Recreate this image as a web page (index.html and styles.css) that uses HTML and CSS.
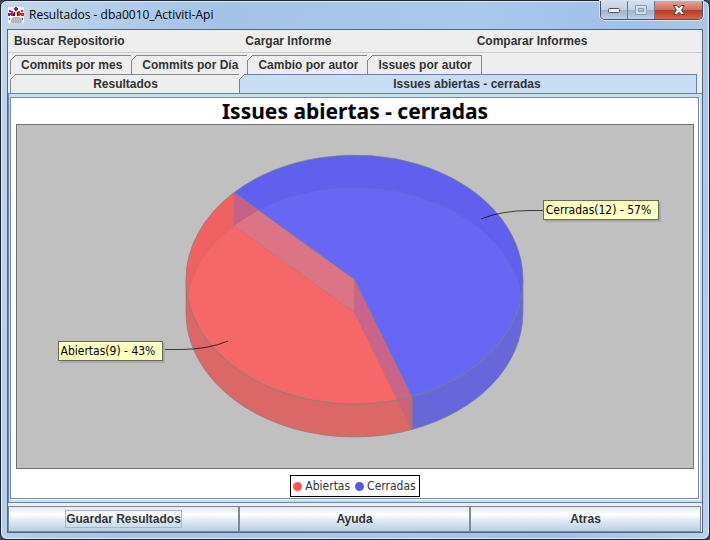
FILE: index.html
```html
<!DOCTYPE html>
<html lang="es">
<head>
<meta charset="utf-8">
<title>Resultados - dba0010_Activiti-Api</title>
<link rel="stylesheet" href="styles.css">
</head>
<body>
<div class="window">
  <header class="titlebar">
    <svg class="app-icon" width="16" height="16" viewBox="0 0 16 16" aria-hidden="true">
      <path fill="#fff" d="M0 0h16v16H0z"/>
      <path fill="#7b1fa2" d="M7 0h2v1h1v2H9v1H7V3H6V1h1zM1 3h2v2H1zM0 6h2v3H0z"/>
      <path fill="#c2185b" d="M3 4h2v2h1v3H3V8H2V6h1z"/>
      <path fill="#d8203c" d="M13 3h2v2h-2zM10 4h2v2h4v3h-3V8h-1v1h-2z"/>
      <path fill="#222" d="M6 5h1v4h2V5h1v4H5V7h1z"/>
      <path fill="#e8d44d" d="M7 4h2v4H7z"/>
      <path fill="#b8b8b8" d="M3 16v-3q0-3 3-3h5q3 0 3 3v3z"/>
      <path fill="#555" d="M1 11h1v2H1zM14 11h1v2h-1z"/>
    </svg>
    <h1 class="window-title">Resultados - dba0010_Activiti-Api</h1>
    <div class="window-buttons">
      <button class="win-btn" type="button" aria-label="Minimizar"><svg width="12" height="5" viewBox="0 0 12 5"><rect x=".5" y=".5" width="11" height="4" rx="1" fill="#fff" stroke="#4b5366"/></svg></button>
      <button class="win-btn" type="button" aria-label="Maximizar" disabled><svg width="12" height="10" viewBox="0 0 12 10"><path fill="#d5dde8" stroke="#8f9aab" fill-rule="evenodd" d="M.5.5h11v9H.5zM3.500 3.500v3h5v-3z"/></svg></button>
      <button class="win-btn win-btn-close" type="button" aria-label="Cerrar"><svg width="12" height="10" viewBox="0 0 12 10"><path fill="#fff" stroke="#4f4650" d="M.5.5h3.400L6 2.800 8.100.5h3.400L8.500 5l3 4.500H8.100L6 7.200 3.900 9.500H.5L3.500 5z"/></svg></button>
    </div>
  </header>
  <main class="content">
    <nav class="menu">
      <a href="#buscar">Buscar Repositorio</a>
      <a href="#cargar">Cargar Informe</a>
      <a href="#comparar">Comparar Informes</a>
    </nav>
    <div class="tabs" role="tablist">
      <div class="tab-row">
        <button class="tab" role="tab" type="button">Commits por mes</button>
        <button class="tab" role="tab" type="button">Commits por Día</button>
        <button class="tab" role="tab" type="button">Cambio por autor</button>
        <button class="tab" role="tab" type="button">Issues por autor</button>
      </div>
      <div class="tab-row">
        <button class="tab tab-half" role="tab" type="button">Resultados</button>
        <button class="tab tab-selected" role="tab" type="button" aria-selected="true">Issues abiertas - cerradas</button>
      </div>
    </div>
    <section class="panel" role="tabpanel">
      <div class="chart">
        <h2 class="chart-title">Issues abiertas - cerradas</h2>
        <div class="plot">
          <svg class="pie" viewBox="17 125 676 343" role="img" aria-label="Abiertas 43%, Cerradas 57%">
            <g stroke="#808080" stroke-opacity=".7">
              <path fill="#6767db" d="M523 279.500V312.500A168.500 124.500 0 0 1 412 429.500V396.500Z"/>
              <path fill="#dc6767" d="M186 279.500V312.500A168.500 124.500 0 0 0 412 429.500V396.500Z"/>
              <path fill="#6060ee" d="M234 192.500A168.500 124.500 0 0 1 523 279.500A168.500 124.500 0 0 1 412 396.500L354.500 279.500Z"/>
              <path fill="#f06161" d="M234 192.500A168.500 124.500 0 0 0 186 279.500A168.500 124.500 0 0 0 412 396.500L354.500 279.500Z"/>
            </g>
            <path fill="#f66767" d="M187.500 296A168.500 124.500 0 0 1 234 225.500L354.500 312.500 397.500 399.900A168.500 124.500 0 0 1 187.500 296Z"/>
            <path fill="#6767f6" d="M258.600 210.300A168.500 124.500 0 0 1 521.500 296A168.500 124.500 0 0 1 412 396.500L354.500 279.500Z"/>
            <path fill="#c66088" d="M234 192.500V225.500Q246 217 258.600 210.300Z"/>
            <path fill="#db7585" d="M234 225.500Q246 217 258.600 210.300L354.500 279.500V312.500Z"/>
            <path fill="#cb648c" d="M354.500 279.500V312.500L397.500 399.900 412 396.500Z"/>
            <path fill="#cb6478" d="M397.500 399.900L412 396.500V429.500Z"/>
            <g fill="none" stroke="#808080" stroke-opacity=".7">
              <path d="M187.500 296A168.500 124.500 0 0 0 521.500 296M234 192.500L354.500 279.500 412 396.500V429.500"/>
              <path stroke-opacity=".25" d="M187.500 296A168.500 124.500 0 0 1 521.500 296M234 192.500V225.500L354.500 312.500 412 429.500M354.500 279.500V312.500"/>
            </g>
            <g fill="none" stroke="#000" stroke-opacity=".7">
              <path d="M481 219Q502 210.500 530 210.500H543"/>
              <path d="M228 341Q208 349.500 180 349.500H165"/>
            </g>
          </svg>
          <span class="label label-closed">Cerradas(12) - 57%</span>
          <span class="label label-open">Abiertas(9) - 43%</span>
        </div>
        <ul class="legend">
          <li class="key key-open">Abiertas</li>
          <li class="key key-closed">Cerradas</li>
        </ul>
      </div>
    </section>
    <footer class="actions">
      <button class="action" type="button"><span class="focus">Guardar Resultados</span></button>
      <button class="action" type="button">Ayuda</button>
      <button class="action" type="button">Atras</button>
    </footer>
  </main>
</div>
</body>
</html>
```
FILE: styles.css
```css
* { box-sizing: border-box; }
body { margin: 0; background: #3f4956; }
button { margin: 0; padding: 0; font: inherit; color: inherit; }

.window {
  display: flex;
  flex-direction: column;
  height: 100vh;
  padding: 0 6px 6px;
  border: 1px solid #1c2530;
  border-radius: 7px;
  background: linear-gradient(100deg, #c3d7ec 0, #a3c3e8 28%, #a8c8ee 60%, #9fc0e8 80%, #b7d1ee 100%);
  box-shadow: inset 0 0 0 1px #dcebfa;
  font: bold 12px/16px "Liberation Sans", Arial, sans-serif;
  color: #333;
}

.titlebar {
  display: flex;
  flex: none;
  align-items: flex-start;
  height: 28px;
  padding-left: 1px;
}
.app-icon { flex: none; margin-top: 6px; }
.window-title {
  flex: 1;
  margin: 5px 0 0 5px;
  font: 12px/18px "Open Sans", "Segoe UI", sans-serif;
  color: #000;
}
.window-buttons {
  display: flex;
  height: 19px;
  border: 1px solid #4a5468;
  border-top: 0;
  border-radius: 0 0 5px 5px;
  overflow: hidden;
  box-shadow: 0 0 0 1px #d5e4f5;
}
.win-btn {
  display: grid;
  place-items: center;
  width: 27px;
  border: 0;
  border-right: 1px solid #6d7b90;
  background: linear-gradient(#d3dfec, #c1d1e3 48%, #9eb2cc 50%, #bdd0e5);
}
.win-btn-close {
  width: 47px;
  border-right: 0;
  background: linear-gradient(#e2a596, #cf6f5d 48%, #b93c25 50%, #d4654a);
}

.content {
  display: flex;
  flex: 1;
  flex-direction: column;
  min-height: 0;
  border: 1px solid #56677c;
  background: #eee;
}

.menu {
  display: grid;
  grid-template-columns: repeat(3, 1fr);
  height: 23px;
  padding-top: 3px;
  border-bottom: 1px solid #ccc;
}
.menu a {
  padding-left: 6px;
  color: inherit;
  text-decoration: none;
}

.tabs { padding: 2px 5px 0 2px; }
.tab-row { display: flex; height: 19px; }
.tab {
  position: relative;
  margin-right: -1px;
  padding: 0 9px 0 10px;
  border: 1px solid #7a8a99;
  border-bottom: 0;
  background: #eee;
  font-weight: bold;
}
/* Cut-off top left corner of each tab */
.tab::before {
  content: "";
  position: absolute;
  top: -1px;
  left: -1px;
  width: 6px;
  height: 6px;
  background: linear-gradient(135deg, #eee 42%, #7a8a99 42%, #7a8a99 58%, transparent 58%);
}
.tab-half { flex: 0 0 230px; }
.tab-row .tab-selected {
  flex: 1;
  margin-right: 0;
  padding-right: 12px;
  border-color: #6382bf;
  background: #c8ddf2;
}

.panel {
  display: flex;
  flex: 1;
  min-height: 0;
  padding: 3px 3px 3px 1px;
  border: 1px solid #6382bf;
  border-right: 0;
  background: #c8ddf2;
}
.chart {
  display: flex;
  flex: 1;
  flex-direction: column;
  align-items: center;
  min-width: 0;
  padding: 0 4px 1px 5px;
  border: 1px solid #7a8a99;
  background: #fff;
  box-shadow: 1px 1px 0 #fff;
}
.chart-title {
  margin: 0;
  font: bold 21px/26px "Noto Sans", Tahoma, sans-serif;
  color: #000;
}
.plot {
  position: relative;
  flex: 1;
  width: 100%;
  min-height: 0;
  border: 1px solid #707070;
  background: #c0c0c0;
}
.pie { display: block; width: 100%; height: 100%; }
.label {
  position: absolute;
  padding: 0 7px 0 2px;
  border: 1px solid #6b6b55;
  background: #ffffc0;
  box-shadow: 2px 2px 0 #aaa;
  font: 12px/18px "DejaVu Sans Condensed", Tahoma, sans-serif;
  color: #000;
}
.label-closed { top: 22%; right: 5%; }
.label-open { top: 63%; left: 6%; }

.legend {
  display: flex;
  gap: 5px;
  margin: 6px 0 0;
  padding: 0 3px 0 2px;
  border: 1px solid #000;
  list-style: none;
  font: 12px/20px "DejaVu Sans Condensed", Tahoma, sans-serif;
}
.key { display: flex; align-items: center; gap: 3px; }
.key::before {
  content: "";
  width: 9px;
  height: 9px;
  border-radius: 50%;
}
.key-open::before { background: #f55; }
.key-closed::before { background: #55f; }

.actions {
  display: grid;
  grid-template-columns: repeat(3, 1fr);
  flex: none;
  height: 29px;
  padding: 3px 1px 0 0;
}
.action {
  border: 1px solid #7a8a99;
  background: linear-gradient(#dde8f3, #fff 30%, #dde8f3 60%, #b8cfe5);
  font-weight: bold;
}
.focus {
  display: inline-block;
  border: 1px solid #a3b8cc;
}
```
